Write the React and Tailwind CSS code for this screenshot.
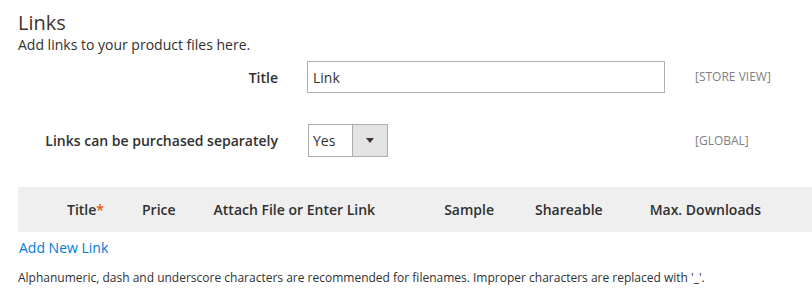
export default function App() {
  const font = { fontFamily: '"Open Sans", "Noto Sans", sans-serif' };
  return (
    <div className="w-[812px] h-[300px] overflow-hidden bg-white text-[#303030]" style={font}>
      <div className="pl-[18px] pt-[11px]">
        <h2 className="text-[20px] leading-[24px] text-[#41362f] font-normal">Links</h2>
        <p className="text-[14px] leading-[20px] text-[#303030]">Add links to your product files here.</p>
      </div>

      <div className="flex items-center mt-[6px] h-[32px]">
        <label className="w-[278px] text-right text-[14px] font-semibold text-[#303030]">Title</label>
        <div className="ml-[29px] w-[358px] h-[32px] border border-[#adadad] flex items-center px-[5px] text-[14px] text-[#303030]">
          Link
        </div>
        <span className="ml-[30px] text-[12px] text-[#808080]">[STORE VIEW]</span>
      </div>

      <div className="flex items-center mt-[31px] h-[33px]">
        <label className="w-[278px] text-right text-[14px] font-semibold text-[#303030]">Links can be purchased separately</label>
        <div className="ml-[30px] w-[80px] h-[33px] border border-[#adadad] flex text-[14px]">
          <div className="flex-1 flex items-center pl-[4px] text-[#303030]">Yes</div>
          <div className="w-[35px] border-l border-[#adadad] bg-[#e3e3e3] flex items-center justify-center">
            <svg width="8" height="5" viewBox="0 0 8 5"><path d="M0 0h8L4 5z" fill="#41362f" /></svg>
          </div>
        </div>
        <span className="ml-[307px] text-[12px] text-[#808080]">[GLOBAL]</span>
      </div>

      <div className="ml-[18px] mt-[30px] h-[45px] bg-[#efefef] flex items-center text-[14px] font-semibold text-[#303030]">
        <span className="ml-[49px]">Title<span className="text-[#eb5202]">*</span></span>
        <span className="ml-[38px]">Price</span>
        <span className="ml-[38px]">Attach File or Enter Link</span>
        <span className="ml-[69px]">Sample</span>
        <span className="ml-[41px]">Shareable</span>
        <span className="ml-[47px]">Max. Downloads</span>
      </div>

      <div className="pl-[19px] mt-[6px] text-[14px] leading-[20px] text-[#007bdb]">Add New Link</div>
      <div className="pl-[18px] mt-[11px] text-[12px] leading-[18px] text-[#303030]">
        Alphanumeric, dash and underscore characters are recommended for filenames. Improper characters are replaced with '_'.
      </div>
    </div>
  );
}
